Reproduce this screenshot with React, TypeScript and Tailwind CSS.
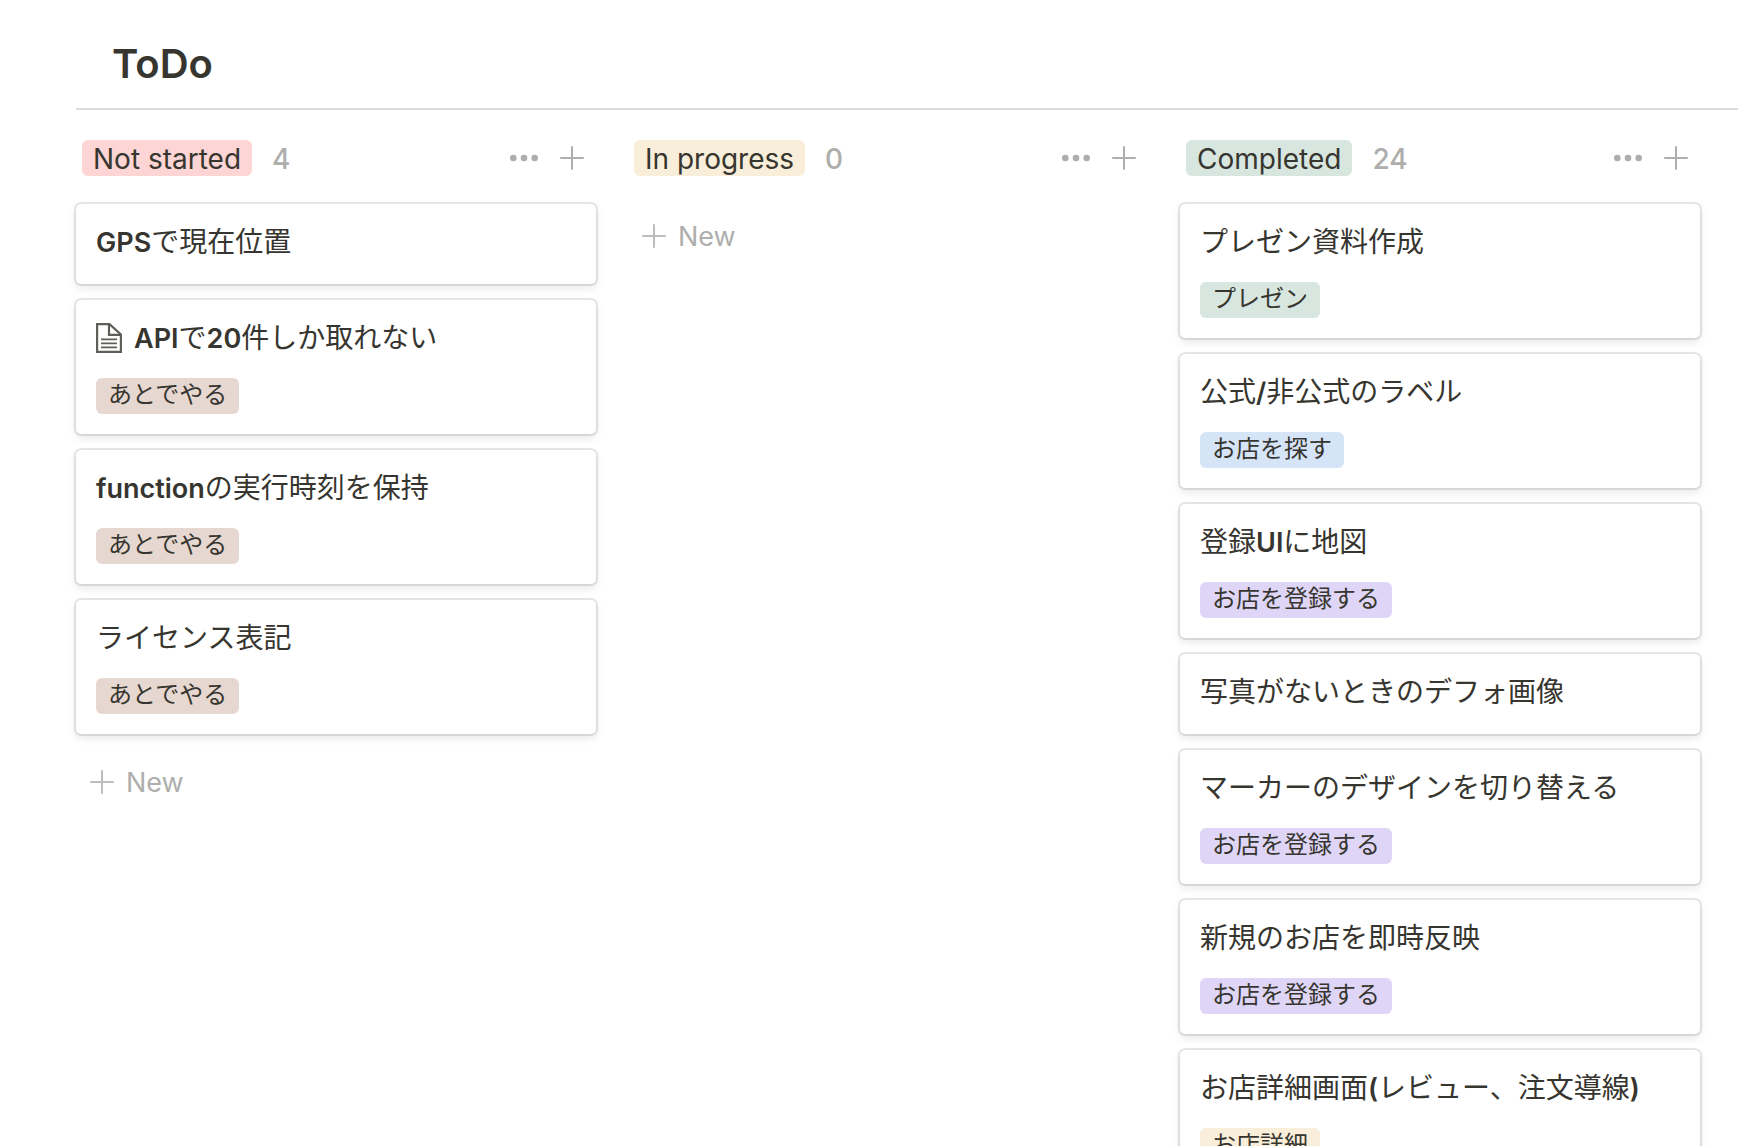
import React from 'react';

interface Card {
  title: string;
  tag?: string;
  tagColor?: string;
  hasPage?: boolean;
}

interface Column {
  name: string;
  color: string;
  count: number;
  cards: Card[];
}

const GREEN = 'bg-[#d8e6e0]';
const YELLOW = 'bg-[#f9eed9]';
const PURPLE = 'bg-[#dfd6f7]';
const BROWN = 'bg-[#e6d8d1]';
const BLUE = 'bg-[#d6e4f7]';
const RED = 'bg-[#fcd5d4]';

const columns: Column[] = [
  {
    name: 'Not started',
    color: RED,
    count: 4,
    cards: [
      { title: 'GPSで現在位置' },
      { title: 'APIで20件しか取れない', tag: 'あとでやる', tagColor: BROWN, hasPage: true },
      { title: 'functionの実行時刻を保持', tag: 'あとでやる', tagColor: BROWN },
      { title: 'ライセンス表記', tag: 'あとでやる', tagColor: BROWN },
    ],
  },
  { name: 'In progress', color: YELLOW, count: 0, cards: [] },
  {
    name: 'Completed',
    color: GREEN,
    count: 24,
    cards: [
      { title: 'プレゼン資料作成', tag: 'プレゼン', tagColor: GREEN },
      { title: '公式/非公式のラベル', tag: 'お店を探す', tagColor: BLUE },
      { title: '登録UIに地図', tag: 'お店を登録する', tagColor: PURPLE },
      { title: '写真がないときのデフォ画像' },
      { title: 'マーカーのデザインを切り替える', tag: 'お店を登録する', tagColor: PURPLE },
      { title: '新規のお店を即時反映', tag: 'お店を登録する', tagColor: PURPLE },
      { title: 'お店詳細画面(レビュー、注文導線)', tag: 'お店詳細', tagColor: YELLOW },
    ],
  },
];

const PlusIcon = ({ className }: { className?: string }) => (
  <svg viewBox="0 0 24 24" className={`size-6 ${className ?? ''}`} fill="none" stroke="currentColor" strokeWidth="2" strokeLinecap="round">
    <path d="M12 1v22M1 12h22" />
  </svg>
);

const DotsIcon = () => (
  <svg viewBox="0 0 28 8" className="h-2 w-7" fill="currentColor">
    <circle cx="3.3" cy="4" r="3.3" />
    <circle cx="14" cy="4" r="3.3" />
    <circle cx="24.7" cy="4" r="3.3" />
  </svg>
);

const PageIcon = () => (
  <svg viewBox="0 0 26 30" className="h-[30px] w-[26px] shrink-0 text-[#5f5e59]" fill="none" stroke="currentColor" strokeWidth="2.2">
    <path d="M1.100 1.100h12.400L24.900 11.500V28.900H1.100z" />
    <path d="M13 1v10.800h12" />
    <path d="M5 16.300h16M5 20.300h16M5 24.300h16" strokeWidth="1.800" />
  </svg>
);

// Latin runs are set heavier than the Japanese around them
const CardTitle = ({ text }: { text: string }) => (
  <span>
    {text.split(/([\x21-\x7e]+)/).map((part, i) =>
      i % 2 === 1 ? (
        <span key={i} className="text-[27px] leading-8 font-semibold">{part}</span>
      ) : (
        part
      )
    )}
  </span>
);

const BoardCard: React.FC<{ card: Card }> = ({ card }) => (
  <article className="min-h-20 rounded-[5px] bg-white px-5 pt-[17px] pb-5 shadow-[0_0_0_2px_rgba(15,15,15,0.1),0_4px_8px_rgba(15,15,15,0.1)]">
    <h3 className="flex h-[42px] items-center gap-3 text-[28px] leading-[42px] whitespace-nowrap">
      {card.hasPage && <PageIcon />}
      <CardTitle text={card.title} />
    </h3>
    {card.tag && (
      <span className={`mt-[19px] block w-fit rounded-md px-3 pb-0.5 text-2xl leading-[34px] ${card.tagColor}`}>
        {card.tag}
      </span>
    )}
  </article>
);

const BoardColumn: React.FC<{ column: Column }> = ({ column }) => (
  <section className="w-[520px] shrink-0">
    <header className="flex items-center px-1.5 text-[28px] leading-[34px]">
      <h2 className={`rounded-md px-[11px] pt-0.5 ${column.color}`}>{column.name}</h2>
      <span className="ml-5 pt-0.5 font-medium text-[#aeaeac]">{column.count}</span>
      <div className="ml-auto flex items-center gap-[22px] pr-1.5 text-[#aeaeac]">
        <button type="button" aria-label={`${column.name} options`}>
          <DotsIcon />
        </button>
        <button type="button" aria-label={`Add to ${column.name}`}>
          <PlusIcon />
        </button>
      </div>
    </header>

    <div className="mt-7 flex flex-col gap-4">
      {column.cards.map((card) => (
        <BoardCard key={card.title} card={card} />
      ))}
      <button type="button" className="flex h-16 items-center gap-3 px-3.5 text-[27px] leading-[34px] text-[#aeaeac]">
        <PlusIcon className="text-[#bdbdbb]" />
        <span className="pt-0.5">New</span>
      </button>
    </div>
  </section>
);

const App: React.FC = () => {
  return (
    <div className="h-screen overflow-hidden bg-white pl-[76px] font-[Inter,'Noto_Sans_CJK_JP',sans-serif] text-[#37352f]">
      <div className="border-b-2 border-[#dededd] px-9 pt-9 pb-4">
        <h1 className="text-[40px] leading-14 font-semibold">ToDo</h1>
      </div>
      <main className="flex gap-8 pt-[30px] pr-9">
        {columns.map((column) => (
          <BoardColumn key={column.name} column={column} />
        ))}
      </main>
    </div>
  );
};

export default App;
